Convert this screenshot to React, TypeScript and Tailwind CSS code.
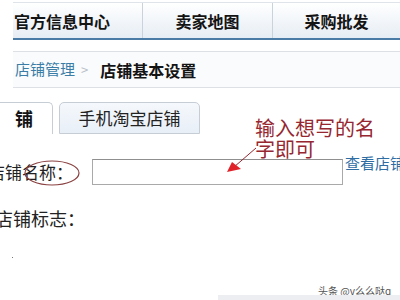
import React from "react";

const cjk = { fontFamily: '"Noto Sans CJK SC", "Noto Sans", sans-serif' };

export default function App() {
  return (
    <div className="relative w-[400px] h-[300px] overflow-hidden bg-white text-[#222]" style={cjk}>
      {/* top nav */}
      <div className="mt-[2px] ml-[13px] h-[38px] flex border-t border-[#dfe4ea] border-b-2 border-b-[#4a7aa6] bg-gradient-to-b from-white to-[#e6edf4]">
        <div className="w-[130px] flex items-center pl-[1px] border-r border-[#c9d3dc] text-[16px] font-bold text-[#141414] whitespace-nowrap">
          官方信息中心
        </div>
        <div className="w-[130px] flex items-center justify-center border-r border-[#c9d3dc] text-[16px] font-bold text-[#141414]">
          卖家地图
        </div>
        <div className="flex-1 flex items-center justify-center text-[16px] font-bold text-[#141414]">
          采购批发
        </div>
      </div>

      {/* breadcrumb */}
      <div className="mt-[11px] ml-[13px] h-[37px] flex items-center border-y border-[#dde1e6] bg-[#fafbfc] pl-[2px]">
        <span className="text-[15px] text-[#3a7ea8]">店铺管理</span>
        <span className="ml-[6px] text-[13px] text-[#b8c0c8]">&gt;</span>
        <span className="ml-[12px] text-[16px] font-bold text-[#141414]">店铺基本设置</span>
      </div>

      {/* tabs */}
      <div className="mt-[14px] h-[32px] flex items-end">
        <div className="w-[53px] h-[32px] flex items-center border-t border-r border-[#c6cdd5] rounded-tr-[5px] bg-white">
          <span className="ml-[15px] text-[18px] font-bold text-[#141414]">铺</span>
        </div>
        <div className="ml-[6px] w-[141px] h-[32px] flex items-center justify-center border border-[#c6cdd5] rounded-t-[5px] bg-gradient-to-b from-[#f5f8fc] to-[#e8eff7]">
          <span className="text-[17px] text-[#222]">手机淘宝店铺</span>
        </div>
      </div>

      {/* shop name row */}
      <div className="mt-[25px] h-[26px] flex items-center">
        <span className="-ml-[12px] w-[104px] shrink-0 text-[17px] text-[#222] whitespace-nowrap">店铺名称：</span>
        <div className="w-[251px] h-[26px] shrink-0 border border-[#a9a9a9] border-t-[#8f8f8f] bg-white" />
        <span className="ml-[2px] -mt-[18px] text-[15px] text-[#2e6da4] whitespace-nowrap">查看店铺</span>
      </div>

      {/* logo row */}
      <div className="mt-[22px] h-[22px] flex items-center">
        <span className="-ml-[5px] text-[18px] text-[#222] whitespace-nowrap">店铺标志：</span>
      </div>

      <div className="absolute left-[12px] top-[257px] w-[1px] h-[1px] bg-[#777]" />

      {/* ellipse around label */}
      <svg className="absolute left-[23px] top-[158px]" width="60" height="30" viewBox="0 0 60 30">
        <ellipse cx="29" cy="15" rx="27" ry="12" fill="none" stroke="#8a4040" strokeWidth="1.2" />
      </svg>

      {/* annotation */}
      <div className="absolute left-[255px] top-[117px] text-[20px] leading-[21px] text-[#962731] whitespace-nowrap">
        <div>输入想写的名</div>
        <div>字即可</div>
      </div>
      <svg className="absolute left-[222px] top-[145px]" width="40" height="35" viewBox="0 0 40 35">
        <line x1="34" y1="3" x2="12" y2="22" stroke="#962731" strokeWidth="1" />
        <polygon points="5,27 10,17 19,24" fill="#e0232b" />
      </svg>

      {/* watermark */}
      <div className="absolute left-[318px] top-[283px] text-[10px] text-[#555] whitespace-nowrap">头条 @y么么哒q</div>
      <div className="absolute left-[218px] top-[295px] w-[182px] h-[5px] bg-[#eceef1]" />
    </div>
  );
}
